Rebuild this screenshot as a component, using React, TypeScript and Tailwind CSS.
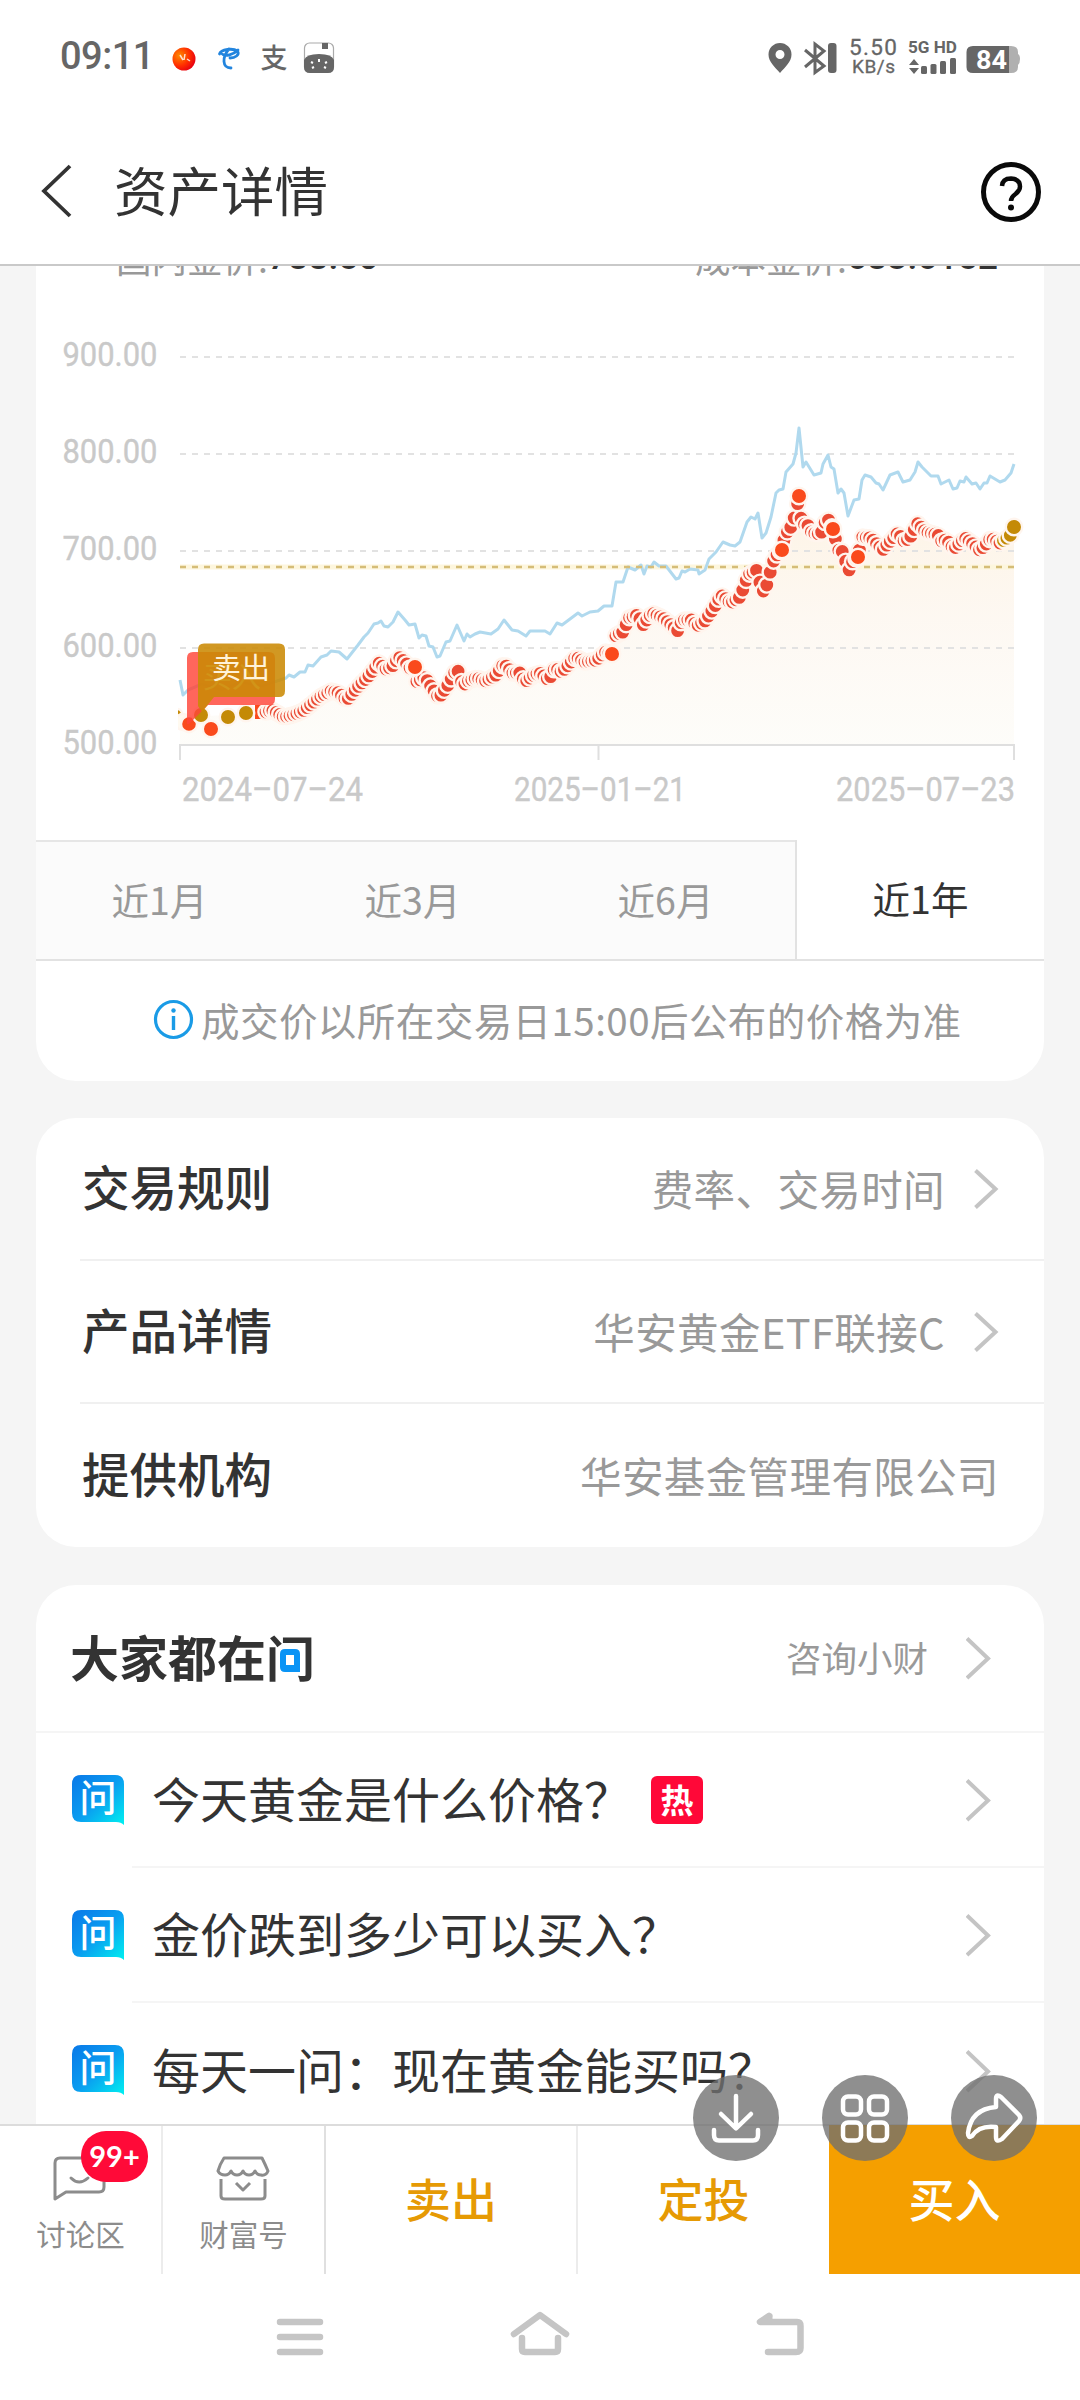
import React from 'react';

type Point = [number, number];

const GOLD = '#c48a06';
const RED = '#fa4a1c';

const marketLine: Point[] = [
  [180, 680], [183, 695], [188, 690], [202, 684], [222, 690], [240, 682], [262, 686], [286, 678], [289, 675], [294, 677],
  [300, 672], [305, 672], [308, 665], [313, 666], [321, 657], [327, 655], [331, 651], [339, 652], [347, 659],
  [358, 645], [364, 637], [368, 633], [374, 624], [378, 623], [381, 621], [384, 626], [388, 627], [393, 622],
  [398, 612], [405, 620], [409, 625], [415, 624], [419, 638], [422, 635], [426, 636], [429, 646], [433, 647],
  [437, 657], [440, 656], [446, 642], [450, 641], [457, 625], [464, 641], [467, 634], [470, 637], [475, 634],
  [480, 632], [491, 634], [498, 629], [504, 620], [512, 630], [518, 631], [526, 636], [530, 631], [539, 631],
  [545, 631], [550, 634], [557, 623], [562, 625], [578, 613], [582, 616], [590, 612], [598, 611], [604, 606],
  [612, 606], [616, 582], [623, 582], [628, 567], [635, 570], [641, 565], [644, 574], [647, 566], [651, 567],
  [654, 562], [659, 566], [666, 566], [676, 579], [679, 578], [682, 571], [685, 572], [690, 569], [698, 570],
  [699, 574], [705, 570], [709, 559], [716, 552], [723, 542], [730, 545], [735, 546], [740, 542], [747, 522],
  [751, 517], [755, 519], [758, 513], [762, 538], [766, 533], [771, 517], [776, 493], [779, 490], [783, 489],
  [786, 472], [793, 464], [796, 453], [799, 428], [803, 467], [806, 462], [814, 475], [821, 473], [823, 464],
  [828, 455], [831, 467], [834, 469], [838, 493], [841, 489], [844, 493], [848, 516], [854, 500], [859, 499],
  [862, 480], [865, 475], [871, 477], [876, 483], [879, 484], [883, 490], [890, 475], [898, 472], [903, 482],
  [910, 480], [915, 472], [918, 462], [922, 467], [931, 476], [938, 476], [941, 484], [949, 480], [953, 489],
  [957, 488], [960, 481], [964, 482], [966, 477], [972, 484], [976, 483], [980, 489], [984, 483], [987, 483],
  [990, 476], [1000, 482], [1005, 480], [1011, 473], [1014, 464],
];

const fundLine: Point[] = [
  [266, 712], [272, 710], [284, 717], [293, 715], [303, 711], [313, 703], [320, 697], [331, 691], [339, 693],
  [347, 700], [358, 687], [368, 677], [379, 663], [386, 669], [392, 667], [399, 657], [405, 662], [410, 668],
  [415, 667], [417, 682], [425, 677], [430, 685], [439, 698], [448, 685], [457, 668], [463, 686], [468, 681],
  [477, 678], [486, 681], [496, 675], [504, 664], [513, 673], [520, 673], [525, 682], [534, 675], [540, 673],
  [549, 680], [555, 668], [562, 672], [576, 657], [585, 662], [597, 660], [605, 652], [612, 654], [616, 635],
  [623, 632], [629, 618], [638, 615], [643, 625], [652, 613], [663, 618], [669, 623], [678, 631], [682, 620],
  [692, 620], [697, 626], [705, 621], [714, 608], [721, 595], [731, 603], [740, 597], [744, 587], [748, 575],
  [757, 570], [762, 591], [765, 591], [768, 581], [771, 569], [775, 557], [782, 550], [785, 535], [791, 527],
  [796, 513], [799, 496], [802, 528], [806, 522], [812, 533], [821, 534], [827, 517], [833, 529], [838, 550],
  [844, 552], [848, 574], [851, 563], [858, 557], [862, 537], [871, 538], [883, 550], [886, 546], [898, 533],
  [905, 542], [912, 535], [917, 523], [926, 532], [938, 535], [943, 543], [946, 539], [954, 549], [965, 538],
  [972, 543], [979, 550], [984, 547], [991, 538], [1000, 543], [1010, 536], [1014, 527],
];

const soloDots: { x: number; y: number; fill: string }[] = [
  { x: 211, y: 729, fill: RED },
  { x: 201, y: 715, fill: GOLD },
  { x: 228, y: 717, fill: GOLD },
  { x: 246, y: 713, fill: GOLD },
  { x: 415, y: 667, fill: RED },
  { x: 612, y: 654, fill: RED },
  { x: 782, y: 550, fill: RED },
  { x: 799, y: 496, fill: RED },
  { x: 833, y: 529, fill: RED },
  { x: 858, y: 557, fill: RED },
  { x: 1014, y: 527, fill: GOLD },
];

const toPoints = (pts: Point[]) => pts.map((p) => p.join(',')).join(' ');

// one marker per trading day
function dailyDots(pts: Point[], step: number): Point[] {
  const out: Point[] = [];
  let i = 0;
  for (let x = pts[0][0]; x <= 1012; x += step) {
    while (pts[i + 1][0] < x) i++;
    const [x0, y0] = pts[i];
    const [x1, y1] = pts[i + 1];
    out.push([x, y0 + ((y1 - y0) * (x - x0)) / (x1 - x0)]);
  }
  return out;
}

const yTicks = [
  { label: '900.00', y: 357 },
  { label: '800.00', y: 454 },
  { label: '700.00', y: 551 },
  { label: '600.00', y: 648 },
  { label: '500.00', y: 745 },
];

const xTicks = [
  { label: '2024–07–24', x: 182, width: 181 },
  { label: '2025–01–21', x: 514, width: 172 },
  { label: '2025–07–23', x: 836, width: 179 },
];

function PriceChart() {
  return (
    <svg width="1008" height="560" viewBox="36 280 1008 560" className="block font-['Roboto',sans-serif]">
      <defs>
        <linearGradient id="area" x1="0" y1="500" x2="0" y2="745" gradientUnits="userSpaceOnUse">
          <stop offset="0" stopColor="#fdf2e2" stopOpacity="0.9" />
          <stop offset="0.5" stopColor="#fdf7f0" stopOpacity="0.85" />
          <stop offset="1" stopColor="#fdfcf8" stopOpacity="0.8" />
        </linearGradient>
        <clipPath id="plot">
          <rect x="178" y="280" width="860" height="480" />
        </clipPath>
      </defs>
      <polygon points={`180,745 180,718 ${toPoints(fundLine)} 1014,745`} fill="url(#area)" />
      {yTicks.map((t) => (
        <g key={t.label}>
          <text x="62.500" y={t.y + 8.5} fontSize="34" fill="#c9c9c9" stroke="#c9c9c9" strokeWidth="0.400" textLength="95" lengthAdjust="spacingAndGlyphs">
            {t.label}
          </text>
          {t.y < 745 && (
            <line x1="180" x2="1014" y1={t.y} y2={t.y} stroke="#e2e2e2" strokeWidth="2" strokeDasharray="6 6" />
          )}
        </g>
      ))}
      <path d="M180 760V745H1014V760M598.500 745V760" fill="none" stroke="#dfdfdf" strokeWidth="2" />
      {xTicks.map((t) => (
        <text key={t.label} x={t.x} y="801" fontSize="34" fill="#c9c9c9" stroke="#c9c9c9" strokeWidth="0.400" textLength={t.width} lengthAdjust="spacingAndGlyphs">
          {t.label}
        </text>
      ))}
      <line x1="180" x2="1014" y1="567" y2="567" stroke="#fdf6dd" strokeWidth="5" />
      <polyline points={toPoints(marketLine)} fill="none" stroke="#b0d9ee" strokeWidth="3" strokeLinejoin="round" />
      <line x1="180" x2="1014" y1="567" y2="567" stroke="#d5bd77" strokeWidth="2.500" strokeDasharray="6 6" />

      <g clipPath="url(#plot)" stroke="#fff5ee" strokeWidth="2.400">
        <ellipse cx="178" cy="718" rx="5" ry="9" fill={GOLD} />
        <circle cx="183" cy="722" r="8" fill="#fffaf0" />
        <circle cx="189" cy="724" r="8" fill={RED} />
        <rect x="255" y="705" width="9" height="14" fill={RED} stroke="none" />
        {dailyDots(fundLine, 3.43).map(([x, y]) => (
          <circle key={x} cx={x} cy={y} r="7.600" fill={x > 1003 ? GOLD : '#ea4a34'} />
        ))}
        {soloDots.map((d) => (
          <circle key={d.x} cx={d.x} cy={d.y} r="8.200" fill={d.fill} />
        ))}
      </g>

      {/* trade flags */}
      <path d="M193 652H269Q275 652 275 658V699Q275 705 269 705H208L189 724H187V658Q187 652 193 652Z" fill="#ff4438" fillOpacity="0.82" />
      <text x="203" y="688" fontSize="29" fill="#ffd9a0" className="font-['Noto_Sans_CJK_SC',sans-serif]">买入</text>
      <path d="M204 643.500H279Q285 643.500 285 649.500V691Q285 697 279 697H214L202 712L198 706V649.500Q198 643.500 204 643.500Z" fill="#cb8a04" fillOpacity="0.880" />
      <text x="212" y="679" fontSize="29" fill="#fff3d9" className="font-['Noto_Sans_CJK_SC',sans-serif]">卖出</text>
    </svg>
  );
}

function Chevron({ small }: { small?: boolean }) {
  return (
    <svg width="26" height="44" viewBox="0 0 26 44" fill="none" className="shrink-0">
      <path d={small ? 'M2.500 3.500L22.500 22L2.500 40.500' : 'M1 2.500L22 22.500L1 42'} stroke="#c4c4c4" strokeWidth="4" />
    </svg>
  );
}

function StatusBar() {
  return (
    <div className="h-[116px] flex items-center justify-between px-[60px] text-[#666]">
      <div className="flex items-center -mt-[4px]">
        <span className="w-[92px] text-[38px] leading-[44px] font-medium tracking-[-0.5px] font-['Roboto',sans-serif]">09:11</span>
        <svg width="164" height="34" viewBox="172 41 164 34" className="ml-[20px] mt-[4px]">
          <defs>
            <radialGradient id="ball" cx="0.3" cy="0.35" r="0.75">
              <stop offset="0" stopColor="#ff8a00" />
              <stop offset="0.6" stopColor="#ff2d00" />
              <stop offset="1" stopColor="#e60012" />
            </radialGradient>
          </defs>
          <circle cx="184" cy="59" r="11.500" fill="url(#ball)" />
          <path d="M180 55l3 5M185 54l-1 6M187 59l3 2" stroke="#ffe0d0" strokeWidth="1.500" />
          <path d="M221 53C225 58 234 54 238 50M219.500 54C221 49 233 48 237.500 51C240 55 235 58 230 58M229 49C222 57 222 68 231 68" fill="none" stroke="#2385de" strokeWidth="2.800" strokeLinecap="round" />
          <text x="260.500" y="68" fontSize="27" fill="#666" className="font-medium font-['Noto_Sans_CJK_SC',sans-serif]">支</text>
          <rect x="304.500" y="43" width="29" height="29" rx="5" fill="#fff" stroke="#aaa" strokeWidth="1.200" />
          <rect x="322" y="43" width="6" height="6" fill="#666" />
          <path d="M304 60Q306 54 319 54Q332 54 334 60V67Q334 73 328 73H310Q304 73 304 67Z" fill="#666" />
          <path d="M311 62l2 1M319 59v3M327 62l-2 1M312 68l2-1M326 68l-2-1" stroke="#fff" strokeWidth="2" />
        </svg>
      </div>
      <svg width="252" height="44" viewBox="768 35 252 44" fill="#666" className="-mt-[2px] font-['Roboto',sans-serif]">
        <path fillRule="evenodd" d="M780 43A11.500 11.500 0 0 1 791.500 54.500C791.500 62 785 67 780 73C775 67 768.500 62 768.500 54.500A11.500 11.500 0 0 1 780 43ZM780 50A4.500 4.500 0 1 0 780 59A4.500 4.500 0 1 0 780 50Z" />
        <path d="M805 50L824 66L815 72.500V44L824 51L805 67" fill="none" stroke="#666" strokeWidth="3" />
        <rect x="828" y="43" width="8.500" height="30" rx="3" />
        <text x="849" y="54.500" fontSize="22.500" textLength="48" stroke="#666" strokeWidth="0.300">5.50</text>
        <text x="852" y="73" fontSize="19" textLength="43" stroke="#666" strokeWidth="0.300">KB/s</text>
        <text x="908" y="53" fontSize="16.500" textLength="49" lengthAdjust="spacingAndGlyphs" className="font-bold">5G HD</text>
        <path d="M909 65L914 59L919 65ZM909 68L914 74L919 68Z" />
        <rect x="921" y="66" width="6" height="8" rx="1.500" />
        <rect x="930.500" y="64" width="6" height="10" rx="1.500" />
        <rect x="940" y="61" width="6" height="13" rx="1.500" />
        <rect x="950" y="58" width="6" height="16" rx="1.500" />
        <path d="M1009 46H1011Q1018 46 1018 52V54Q1020 55 1020 59Q1020 63 1018 65V67Q1018 73 1011 73H1009Z" fill="#b0b0b0" />
        <path d="M973 46H1009V73H973Q966.500 73 966.500 67V52Q966.500 46 973 46Z" />
        <text x="976" y="69" fontSize="26" fill="#fff" textLength="31" lengthAdjust="spacingAndGlyphs" className="font-bold">84</text>
      </svg>
    </div>
  );
}

function Header() {
  return (
    <div className="h-[150px] flex items-center justify-between pl-[40px] pr-[38px] border-b-2 border-[#c9c9c9]">
      <div className="flex items-center gap-[41px]">
        <svg width="33" height="54" viewBox="0 0 33 54" fill="none" className="mt-[2px]">
          <path d="M30 2L4 27L30 52" stroke="#333" strokeWidth="3.800" />
        </svg>
        <h1 className="pb-[2px] text-[53.500px] leading-[64px] text-[#333]">资产详情</h1>
      </div>
      <svg width="62" height="62" viewBox="0 0 62 62" fill="none" stroke="#0a0a0a" className="mt-[3px]">
        <circle cx="31" cy="31" r="27.500" strokeWidth="5" />
        <path d="M22 25Q22.500 17.500 31 17.500Q40 18 40 25.500Q40 29.500 35.500 33Q31 36 31 40" strokeWidth="4.500" />
        <circle cx="31" cy="46.500" r="3" fill="#0a0a0a" stroke="none" />
      </svg>
    </div>
  );
}

const ranges = ['近1月', '近3月', '近6月'];

function ChartCard() {
  return (
    <section className="bg-white rounded-b-[40px] h-[815px] overflow-hidden">
      <div className="-mt-[27px] h-[41px] flex justify-between pl-[80px] pr-[46px] text-[35.500px] leading-[37px] text-[#999]">
        <div className="flex">
          国内金价:<b className="font-['Roboto',sans-serif] font-medium text-[#333]">788.50</b>
        </div>
        <div className="flex">
          成本金价:<b className="font-['Roboto',sans-serif] font-medium text-[#333]">683.6152</b>
        </div>
      </div>
      <PriceChart />
      <div className="flex h-[121px] border-b-2 border-[#e2e2e2] text-[37.500px]">
        {ranges.map((r) => (
          <div key={r} className="w-[253px] flex items-center justify-center pr-[6px] pb-[2px] bg-[#fbfbfb] border-t-2 border-[#e6e6e6] text-[#999]">
            {r}
          </div>
        ))}
        <div className="flex-1 flex items-center justify-center pb-[2px] border-l-2 border-[#e2e2e2] text-[#333]">近1年</div>
      </div>
      <div className="h-[118px] flex items-center pl-[117px]">
        <svg width="41" height="41" viewBox="0 0 41 41" fill="none" stroke="#1a9be6" className="shrink-0 -mt-[2px]">
          <circle cx="20.500" cy="20.500" r="18" strokeWidth="3.200" />
          <path d="M20.500 17V31" strokeWidth="3.400" />
          <circle cx="20.500" cy="11.500" r="2.200" fill="#1a9be6" stroke="none" />
        </svg>
        <span className="ml-[7px] pb-[3px] text-[38.500px] leading-[46px] tracking-[0.45px] text-[#999] whitespace-nowrap">成交价以所在交易日15:00后公布的价格为准</span>
      </div>
    </section>
  );
}

const infoRows = [
  { title: '交易规则', value: '费率、交易时间', link: true },
  { title: '产品详情', value: '华安黄金ETF联接C', link: true },
  { title: '提供机构', value: '华安基金管理有限公司', link: false },
];

function InfoCard() {
  return (
    <section className="mt-[37px] h-[429px] bg-white rounded-[40px] pl-[44px]">
      {infoRows.map((row, i) => (
        <div key={row.title} className={`h-[143px] flex items-center justify-between pl-[2px] pr-[45px] ${i < 2 ? 'border-b-2 border-[#f0f0f0]' : ''}`}>
          <span className="pb-[5px] text-[47.500px] leading-[56px] font-medium text-[#333]">{row.title}</span>
          <span className="flex items-center gap-[28px] text-[41.500px] leading-[50px] tracking-[0.4px] text-[#999]">
            <span className="pb-[2px]">{row.value}</span>
            {row.link && <Chevron small />}
          </span>
        </div>
      ))}
    </section>
  );
}

function AskIcon() {
  return (
    <svg width="52" height="50" viewBox="0 0 52 50" className="shrink-0 -mt-[2px]">
      <defs>
        <linearGradient id="ask" x1="0" y1="0" x2="1" y2="1">
          <stop offset="0" stopColor="#0a78e8" />
          <stop offset="0.5" stopColor="#0a9df0" />
          <stop offset="1" stopColor="#00f0f0" />
        </linearGradient>
      </defs>
      <path d="M9 0H43Q52 0 52 9V50Q49 47 44 47H9Q0 47 0 38V9Q0 0 9 0Z" fill="url(#ask)" />
      <text x="7.500" y="36.500" fontSize="37" fill="#fff" className="font-medium font-['Noto_Sans_CJK_SC',sans-serif]">问</text>
    </svg>
  );
}

const questions = [
  { text: '今天黄金是什么价格？', hot: true },
  { text: '金价跌到多少可以买入？', hot: false },
  { text: '每天一问：现在黄金能买吗？', hot: false },
];

function QuestionCard() {
  return (
    <section className="mt-[38px] bg-white rounded-t-[40px]">
      <div className="h-[148px] flex items-center justify-between pl-[34px] pr-[52px] border-b-2 border-[#f5f5f5]">
        <div className="relative pb-[4px] text-[49px] leading-[58px] font-bold text-[#333]">
          大家都在问
          <svg width="25" height="27" viewBox="0 0 25 27" className="absolute left-[208px] top-[20px]">
            <rect width="25" height="27" fill="#fff" />
            <path fillRule="evenodd" d="M7 2H17Q22 2 22 7V25H7Q2 25 2 20V7Q2 2 7 2ZM8 8V18H16V8Z" fill="#0a94f5" />
          </svg>
        </div>
        <span className="flex items-center gap-[38px] text-[35.500px] leading-[44px] text-[#999]">
          <span className="pb-[2px]">咨询小财</span>
          <Chevron />
        </span>
      </div>
      {questions.map((q, i) => (
        <div key={q.text} className="h-[135px] flex items-center pl-[36px]">
          <AskIcon />
          <div className={`ml-[8px] pr-[52px] pl-[20px] h-full flex-1 flex items-center ${i < 2 ? 'border-b-2 border-[#f5f5f5]' : ''}`}>
            <span className="pb-[5px] text-[48px] leading-[58px] text-[#333] whitespace-nowrap">{q.text}</span>
            {q.hot && (
              <span className="ml-[19px] w-[52px] h-[48px] pb-[2px] rounded-[6px] bg-[#ff0838] text-white text-[33px] font-bold leading-[40px] flex items-center justify-center">热</span>
            )}
            <span className="ml-auto">
              <Chevron />
            </span>
          </div>
        </div>
      ))}
    </section>
  );
}

function ActionBar() {
  return (
    <div className="relative h-[150px] bg-white border-t-2 border-[#dcdcdc] flex text-[46px] font-medium text-[#e69a04]">
      <div className="relative w-[163px] border-r-2 border-[#ececec] flex flex-col items-center pt-[30px] text-[29.500px] font-normal text-[#8c8c8c]">
        <svg width="54" height="46" viewBox="0 0 54 46" fill="none" stroke="#8c8c8c" strokeWidth="3" className="mr-[2px]">
          <path d="M7 2H46Q51 2 51 7V31Q51 36 46 36H13L2 43V7Q2 2 7 2Z" strokeLinejoin="round" />
          <path d="M18 22Q26 30 35 22" strokeLinecap="round" />
        </svg>
        <span className="mt-[13px] leading-[37px]">讨论区</span>
        <span className="absolute left-[81px] top-[5px] w-[67px] h-[51px] pb-[2px] rounded-[25px] bg-[#ff0a38] text-white text-[29px] font-bold font-['Lato',sans-serif] flex items-center justify-center">99+</span>
      </div>
      <div className="w-[163px] border-r-2 border-[#e0e0e0] flex flex-col items-center pt-[30px] text-[29.500px] font-normal text-[#8c8c8c]">
        <svg width="54" height="46" viewBox="0 0 54 46" fill="none" stroke="#8c8c8c" strokeWidth="3" strokeLinejoin="round" className="mr-[2px]">
          <path d="M8 2H46Q49 8 52 15Q50 20 45 19Q41 19 39 15Q37 19 33 19Q29 19 27 15Q25 19 21 19Q17 19 15 15Q13 19 9 19Q4 19 2 15Q4 8 8 2Z" />
          <path d="M5 23V40Q5 43 9 43H45Q49 43 49 40V23" />
          <path d="M20 27L27 34L34 27" />
        </svg>
        <span className="mt-[13px] leading-[37px]">财富号</span>
      </div>
      <div className="w-[252px] border-r-2 border-[#ececec] flex items-center justify-center pb-[5px]">卖出</div>
      <div className="w-[251px] flex items-center justify-center pb-[5px]">定投</div>
      <div className="flex-1 -mt-px bg-[#f59f00] text-white flex items-center justify-center pb-[4px]">买入</div>
    </div>
  );
}

function NavBar() {
  return (
    <div className="flex-1 bg-white flex justify-center pt-[32px]">
      <svg width="532" height="56" viewBox="274 2306 532 56" fill="none" stroke="#c5c5c5" strokeWidth="6.500" strokeLinecap="round" strokeLinejoin="round">
        <path d="M280 2322H320M280 2337H320M280 2352H320" />
        <path d="M514 2334L540 2315L566 2334" />
        <path d="M522 2338V2349Q522 2352 525 2352H555Q558 2352 558 2349V2338" />
        <path d="M769 2316L760 2322H797Q800.500 2322 800.500 2326V2348Q800.500 2352 796 2352H768" />
        <path d="M762 2321L771 2315V2321Z" fill="#c5c5c5" strokeWidth="3" />
      </svg>
    </div>
  );
}

function FloatingActions() {
  const circle = 'w-[86px] h-[86px] rounded-full bg-[#707070]/[0.78] flex items-center justify-center';
  const icon = { width: 58, height: 58, viewBox: '0 0 58 58', fill: 'none', stroke: '#fff', strokeWidth: 4.5, strokeLinecap: 'round', strokeLinejoin: 'round' } as const;
  return (
    <div className="absolute left-[693px] top-[2075px] flex gap-[43px]">
      <div className={circle}>
        <svg {...icon}>
          <path d="M29 7V39M14 25L29 39.500L44 25M7 41V46Q7 51.500 12 51.500H46Q51 51.500 51 46V41" />
        </svg>
      </div>
      <div className={circle}>
        <svg {...icon}>
          <rect x="7" y="7.500" width="18" height="18" rx="5" />
          <rect x="33" y="7.500" width="18" height="18" rx="5" />
          <rect x="7" y="33.500" width="18" height="18" rx="5" />
          <rect x="33" y="33.500" width="18" height="18" rx="5" />
        </svg>
      </div>
      <div className={circle}>
        <svg {...icon}>
          <path d="M31 18V10Q31 4 36 8L54 26Q56.500 29 54 32L37 50Q31 54 31 48V38Q14 36 7 47Q3 50 3 44Q6 20 31 18Z" />
        </svg>
      </div>
    </div>
  );
}

export default function App() {
  return (
    <div className="relative w-[1080px] h-[2400px] overflow-hidden flex flex-col bg-white font-['Noto_Sans_CJK_SC',sans-serif]">
      <StatusBar />
      <Header />
      <main className="h-[1858px] shrink-0 overflow-hidden bg-[#f5f5f5] px-[36px]">
        <ChartCard />
        <InfoCard />
        <QuestionCard />
      </main>
      <ActionBar />
      <NavBar />
      <FloatingActions />
    </div>
  );
}
